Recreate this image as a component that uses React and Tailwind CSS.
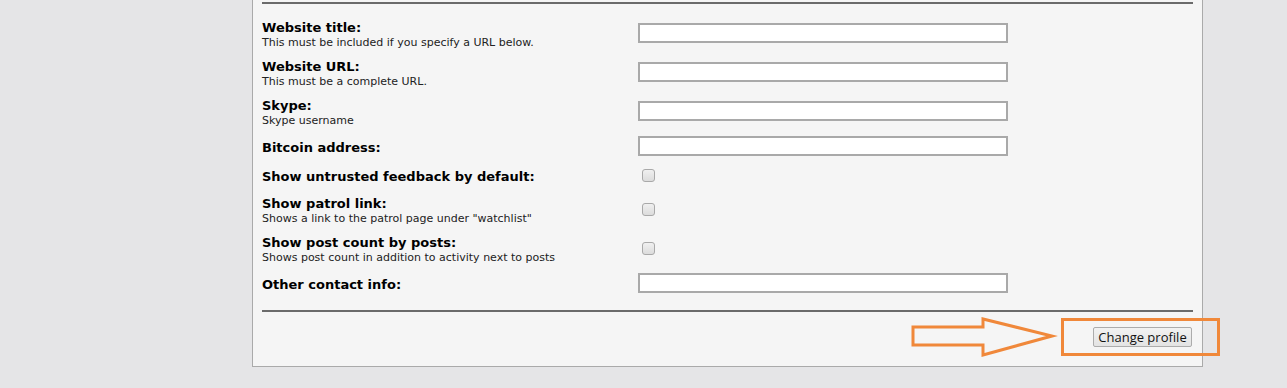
import React from 'react';

const rows = [
  { label: 'Website title:', desc: 'This must be included if you specify a URL below.', type: 'text', h: 'h-[39px]' },
  { label: 'Website URL:', desc: 'This must be a complete URL.', type: 'text', h: 'h-[39px]' },
  { label: 'Skype:', desc: 'Skype username', type: 'text', h: 'h-[39px]' },
  { label: 'Bitcoin address:', type: 'text', h: 'h-[31px]' },
  { label: 'Show untrusted feedback by default:', type: 'check', h: 'h-[28px]' },
  { label: 'Show patrol link:', desc: 'Shows a link to the patrol page under "watchlist"', type: 'check', h: 'h-[40px]' },
  { label: 'Show post count by posts:', desc: 'Shows post count in addition to activity next to posts', type: 'check', h: 'h-[38px]' },
  { label: 'Other contact info:', type: 'text', h: 'h-[31px]' },
];

function Field({ type }) {
  if (type === 'check') {
    return (
      <span className="ml-[4px] block w-[13px] h-[13px] rounded-[3px] border border-[#a9a9a9] bg-gradient-to-b from-[#f0f0f0] to-[#dcdcdc]" />
    );
  }
  return <div className="w-[370px] h-[20px] border-2 border-[#a9a9a9] bg-white" />;
}

export default function App() {
  return (
    <div className="w-[1287px] h-[388px] bg-[#e5e5e7] overflow-hidden font-['DejaVu_Sans',Verdana,sans-serif] text-black">
      <div className="ml-[252px] w-[951px] mt-[-20px] h-[387px] border border-[#aaaaaa] bg-[#f5f5f5] px-[9px] pt-[21px] relative">
        <div className="h-[2px] bg-[#6b6b6b]" />
        <div className="mt-[9px]">
          {rows.map((r) => (
            <div key={r.label} className={`flex items-center ${r.h}`}>
              <div className="w-[376px] shrink-0 pt-[4px]">
                <div className="text-[13px] font-bold leading-[16px]">{r.label}</div>
                {r.desc && <div className="text-[11px] leading-[14px] text-[#222]">{r.desc}</div>}
              </div>
              <Field type={r.type} />
            </div>
          ))}
        </div>
        <div className="mt-[12px] h-[2px] bg-[#6b6b6b]" />
        <div className="flex justify-end pt-[15px] pr-[1px]">
          <button className="w-[99px] h-[20px] border border-[#acacac] rounded-[2px] bg-gradient-to-b from-[#f2f2f2] to-[#e3e3e3] text-[13px] leading-[17px] font-['Open_Sans',sans-serif] text-[#111]">
            Change profile
          </button>
        </div>
      </div>
      <svg className="absolute left-0 top-0 pointer-events-none" width="1287" height="388">
        <polygon
          points="913,327 983,327 983,319 1052,336 983,355 983,345 913,345"
          fill="none"
          stroke="#f0883a"
          strokeWidth="3"
          strokeLinejoin="miter"
        />
        <rect x="1062.5" y="319.5" width="156" height="35" fill="none" stroke="#f0883a" strokeWidth="3" />
      </svg>
    </div>
  );
}
